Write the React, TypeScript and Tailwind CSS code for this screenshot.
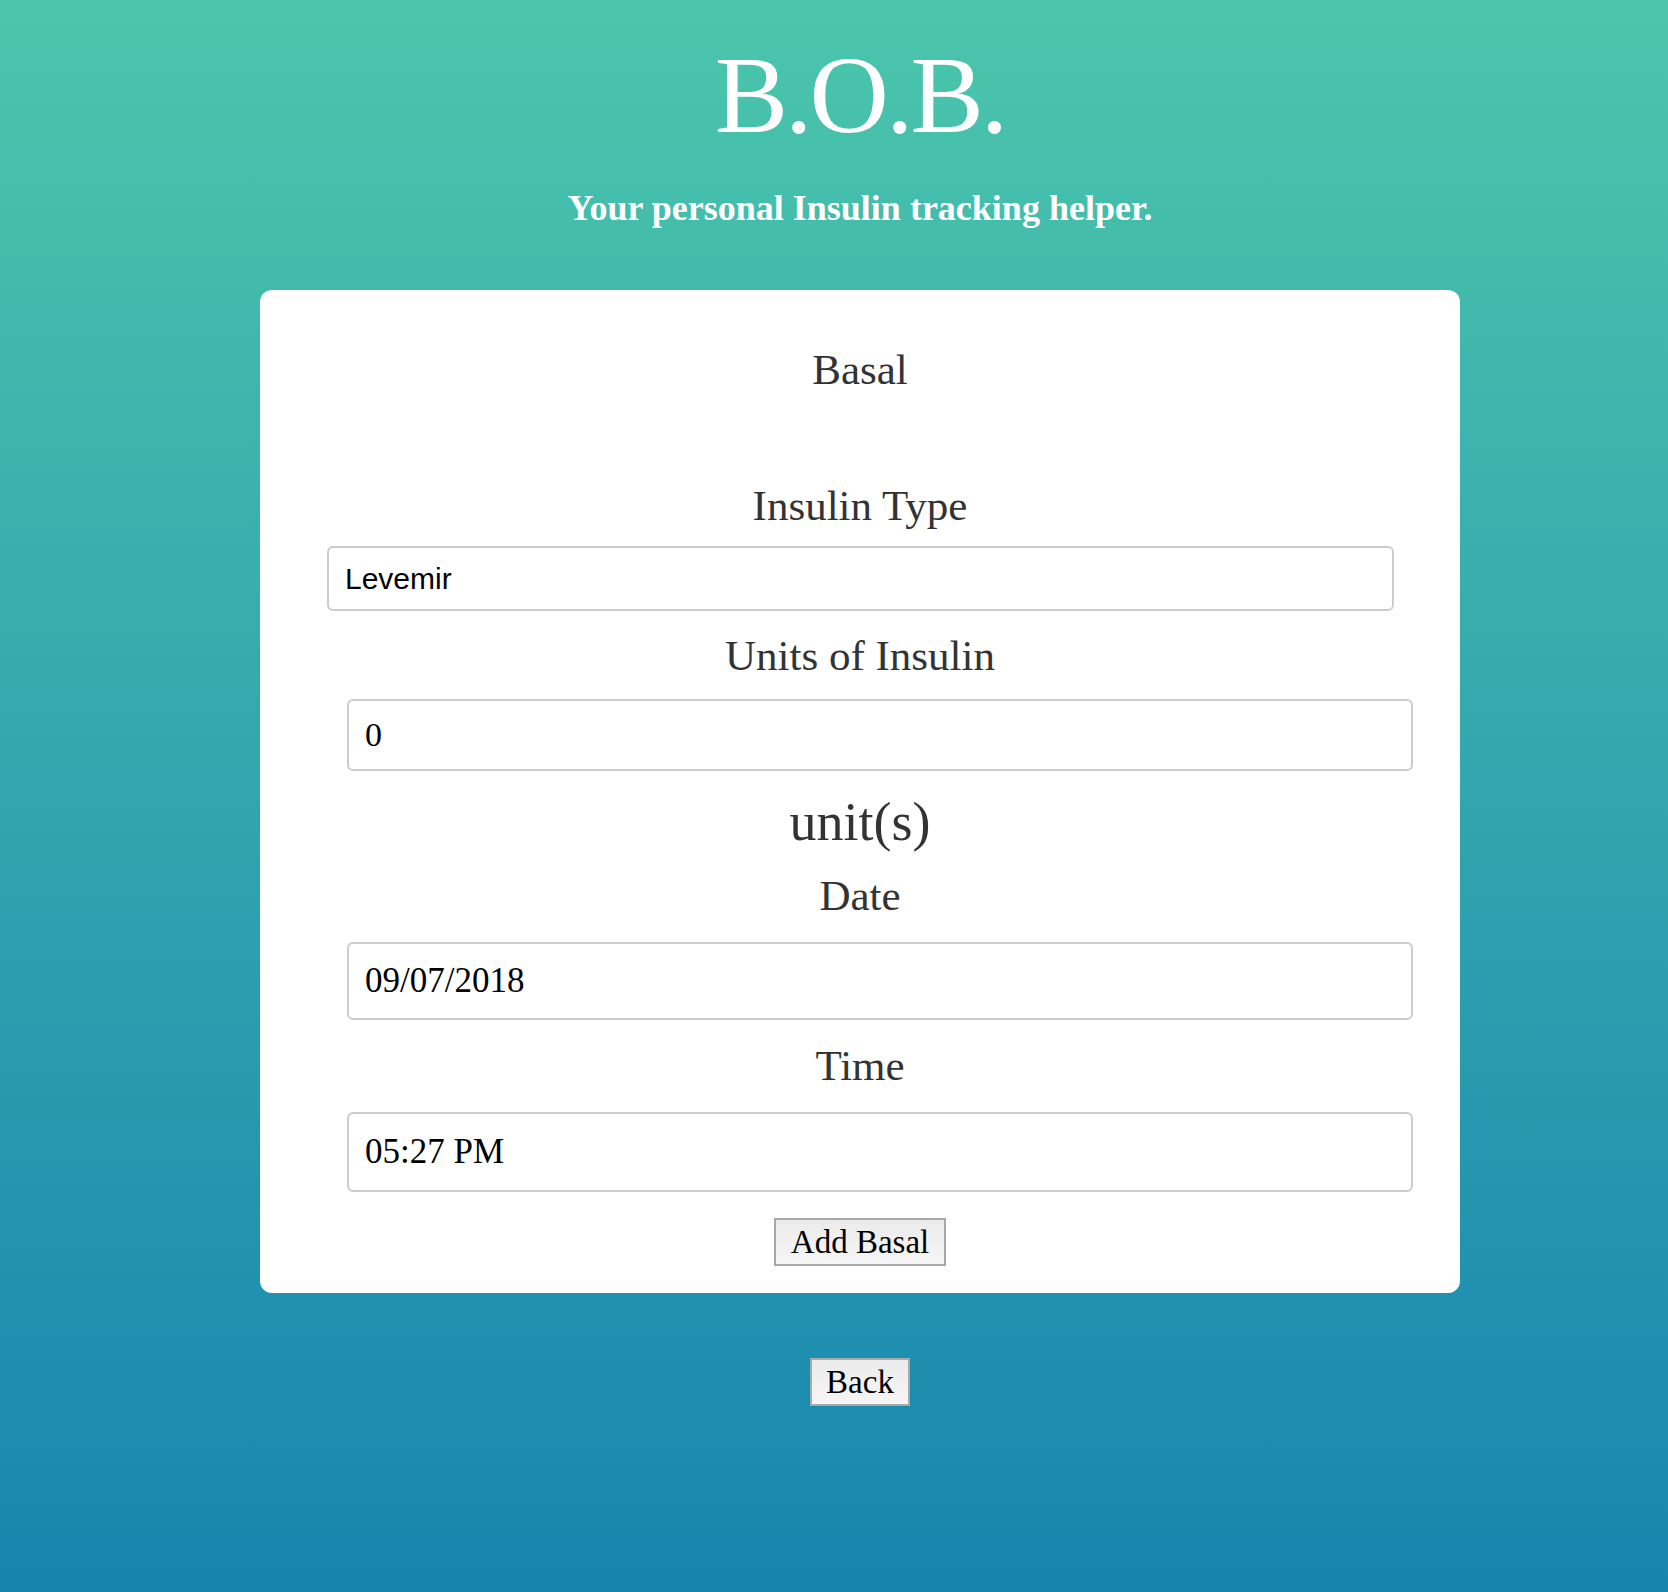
import { useState } from 'react';

const serif = "font-['Liberation_Serif',_'Times_New_Roman',_serif]";

const Label = ({ children, big }: { children: React.ReactNode; big?: boolean }) => (
  <p className={`${serif} text-center text-[#333] leading-none ${big ? 'text-[54px]' : 'text-[43px]'}`}>
    {children}
  </p>
);

export default function App() {
  const [insulin, setInsulin] = useState('Levemir');
  const [units, setUnits] = useState('0');
  const [date, setDate] = useState('09/07/2018');
  const [time, setTime] = useState('05:27 PM');

  return (
    <div className="min-h-screen w-full bg-gradient-to-b from-[#4bc6ab] to-[#1685ae] flex flex-col items-center pl-[52px]">
      {/* Header */}
      <h1 className={`${serif} pt-[40px] text-[110px] leading-none tracking-[-3px] text-white`}>B.O.B.</h1>
      <p className={`${serif} mt-[40px] text-[36px] leading-none font-bold text-white`}>
        Your personal Insulin tracking helper.
      </p>

      {/* Form card */}
      <div className="mt-[64px] w-[1200px] rounded-xl bg-white flex flex-col pt-[58px] pb-[27px]">
        <Label>Basal</Label>

        <div className="mt-[93px]">
          <Label>Insulin Type</Label>
        </div>
        <input
          type="text"
          value={insulin}
          onChange={(e) => setInsulin(e.target.value)}
          className="mt-[19px] ml-[67px] mr-[66px] h-[65px] rounded-md border-2 border-[#cccccc] bg-white pl-[16px] font-['Liberation_Sans',_Arial,_sans-serif] text-[30px] text-black outline-none"
        />

        <div className="mt-[23px]">
          <Label>Units of Insulin</Label>
        </div>
        <input
          type="text"
          value={units}
          onChange={(e) => setUnits(e.target.value)}
          className={`${serif} mt-[22px] ml-[87px] mr-[47px] h-[72px] rounded-md border-2 border-[#cccccc] bg-white pl-[16px] text-[34px] text-black outline-none`}
        />

        <div className="mt-[24px]">
          <Label big>unit(s)</Label>
        </div>

        <div className="mt-[25px]">
          <Label>Date</Label>
        </div>
        <input
          type="text"
          value={date}
          onChange={(e) => setDate(e.target.value)}
          className={`${serif} mt-[25px] ml-[87px] mr-[47px] h-[78px] rounded-md border-2 border-[#cccccc] bg-white pl-[16px] text-[35px] text-black outline-none`}
        />

        <div className="mt-[24px]">
          <Label>Time</Label>
        </div>
        <input
          type="text"
          value={time}
          onChange={(e) => setTime(e.target.value)}
          className={`${serif} mt-[25px] ml-[87px] mr-[47px] h-[80px] rounded-md border-2 border-[#cccccc] bg-white pl-[16px] text-[35px] text-black outline-none`}
        />

        <div className="mt-[26px] flex justify-center">
          <button
            className={`${serif} h-[48px] px-[15px] border-2 border-[#a9a9a9] bg-gradient-to-b from-[#ebebeb] to-[#f6f6f6] text-[33px] leading-none text-black`}
          >
            Add Basal
          </button>
        </div>
      </div>

      <button
        className={`${serif} mt-[65px] h-[48px] px-[14px] border-2 border-[#a9a9a9] bg-gradient-to-b from-[#ebebeb] to-[#f6f6f6] text-[33px] leading-none text-black`}
      >
        Back
      </button>
    </div>
  );
}
